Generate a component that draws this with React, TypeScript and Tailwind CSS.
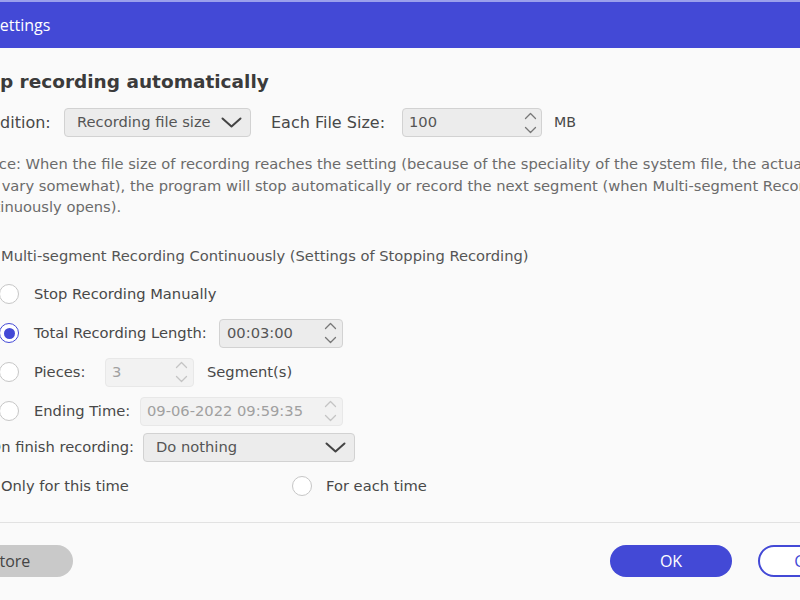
import React from "react";

function Chevron({ w = 21, h = 11, color = "#444", sw = 2 }: { w?: number; h?: number; color?: string; sw?: number }) {
  return (
    <svg width={w} height={h} viewBox={`0 0 ${w} ${h}`} fill="none">
      <path d={`M1.5 1.5 L${w / 2} ${h - 1.5} L${w - 1.5} 1.5`} stroke={color} strokeWidth={sw} strokeLinecap="round" strokeLinejoin="round" />
    </svg>
  );
}

function SpinArrows({ color = "#777" }: { color?: string }) {
  return (
    <svg width="13" height="22" viewBox="0 0 13 22" fill="none">
      <path d="M1.5 6.5 L6.5 1.5 L11.5 6.5" stroke={color} strokeWidth="1.3" strokeLinecap="round" strokeLinejoin="round" />
      <path d="M1.5 15.5 L6.5 20.5 L11.5 15.5" stroke={color} strokeWidth="1.3" strokeLinecap="round" strokeLinejoin="round" />
    </svg>
  );
}

function Radio({ checked = false }: { checked?: boolean }) {
  return checked ? (
    <div className="w-[20px] h-[20px] shrink-0 rounded-full border-[1.5px] border-[#4349d6] bg-white flex items-center justify-center">
      <div className="w-[11px] h-[11px] rounded-full bg-[#4349d6]" />
    </div>
  ) : (
    <div className="w-[20px] h-[20px] shrink-0 rounded-full border-[1.5px] border-[#c6c6c6] bg-white" />
  );
}

export default function App() {
  return (
    <div className="w-[800px] h-[600px] overflow-hidden bg-[#fafafa] font-['DejaVu_Sans',sans-serif] text-[#484848]">
      {/* header */}
      <div className="h-[48px] border-t-2 border-[#9ba0ec] bg-[#4349d6] flex items-center">
        <span className="ml-[-9px] text-[16px] text-white font-['Open_Sans',sans-serif]">Settings</span>
      </div>

      <div className="ml-[-31px] w-[900px]">
        {/* title */}
        <div className="mt-[20px] h-[28px] leading-[28px] text-[18.5px] font-bold text-[#3b3b3b] ml-[-4px] whitespace-nowrap">
          Stop recording automatically
        </div>

        {/* condition row */}
        <div className="mt-[12px] h-[29px] flex items-center text-[14.7px]">
          <div className="w-[95px] text-[16px] whitespace-nowrap">Condition:</div>
          <div className="w-[187px] h-[29px] rounded-[4px] border border-[#d2d2d2] bg-[#ececec] flex items-center pl-[12px] pr-[8px] justify-between">
            <span className="text-[#555]">Recording file size</span>
            <Chevron />
          </div>
          <div className="ml-[20px] w-[131px] text-[16px] whitespace-nowrap">Each File Size:</div>
          <div className="w-[140px] h-[29px] rounded-[4px] border border-[#d2d2d2] bg-[#ececec] flex items-center pl-[6px] pr-[4px] justify-between">
            <span className="text-[#555]">100</span>
            <SpinArrows />
          </div>
          <div className="ml-[12px] text-[14.2px]">MB</div>
        </div>

        {/* notice */}
        <div className="mt-[16px] text-[14.7px] leading-[21.5px] text-[#6b6b6b] whitespace-nowrap">
          <div>Notice: When the file size of recording reaches the setting (because of the speciality of the system file, the actual size</div>
          <div className="ml-[-4px]">may vary somewhat), the program will stop automatically or record the next segment (when Multi-segment Recording</div>
          <div className="ml-[-3px]">Continuously opens).</div>
        </div>

        {/* multi segment */}
        <div className="mt-[29px] h-[20px] flex items-center text-[14.7px] text-[#555]">
          <div className="w-[18px] h-[18px] rounded-[3px] border-[1.5px] border-[#c6c6c6] bg-white shrink-0" />
          <span className="ml-[14px] whitespace-nowrap">Multi-segment Recording Continuously (Settings of Stopping Recording)</span>
        </div>

        {/* radio options */}
        <div className="mt-[13px] pl-[30px] flex flex-col gap-[10px] text-[14.7px]">
          <div className="h-[29px] flex items-center">
            <Radio />
            <span className="ml-[15px] whitespace-nowrap">Stop Recording Manually</span>
          </div>
          <div className="h-[29px] flex items-center">
            <Radio checked />
            <span className="ml-[15px] w-[185px] whitespace-nowrap">Total Recording Length:</span>
            <div className="w-[124px] h-[29px] rounded-[4px] border border-[#d2d2d2] bg-[#ececec] flex items-center pl-[7px] pr-[5px] justify-between">
              <span className="text-[#555]">00:03:00</span>
              <SpinArrows />
            </div>
          </div>
          <div className="h-[29px] flex items-center">
            <Radio />
            <span className="ml-[15px] w-[71px] whitespace-nowrap">Pieces:</span>
            <div className="w-[89px] h-[29px] rounded-[4px] border border-[#e8e8e8] bg-[#f2f2f2] flex items-center pl-[6px] pr-[5px] justify-between">
              <span className="text-[#a0a0a0]">3</span>
              <SpinArrows color="#c4c4c4" />
            </div>
            <span className="ml-[13px] whitespace-nowrap">Segment(s)</span>
          </div>
          <div className="h-[29px] flex items-center">
            <Radio />
            <span className="ml-[15px] w-[106px] whitespace-nowrap">Ending Time:</span>
            <div className="w-[203px] h-[29px] rounded-[4px] border border-[#e8e8e8] bg-[#f2f2f2] flex items-center pl-[6px] pr-[5px] justify-between">
              <span className="text-[#a0a0a0]">09-06-2022 09:59:35</span>
              <SpinArrows color="#c4c4c4" />
            </div>
          </div>
        </div>

        {/* on finish */}
        <div className="mt-[7px] h-[29px] flex items-center text-[14.7px]">
          <div className="w-[174px] flex justify-end pr-[9px] whitespace-nowrap">On finish recording:</div>
          <div className="w-[212px] h-[29px] rounded-[4px] border border-[#d2d2d2] bg-[#ececec] flex items-center pl-[12px] pr-[8px] justify-between">
            <span className="text-[#555]">Do nothing</span>
            <Chevron />
          </div>
        </div>

        {/* scope */}
        <div className="mt-[10px] h-[29px] flex items-center text-[14.7px]">
          <div className="w-[323px] flex items-center">
            <Radio />
            <span className="ml-[12px] whitespace-nowrap">Only for this time</span>
          </div>
          <div className="flex items-center">
            <Radio />
            <span className="ml-[14px] whitespace-nowrap">For each time</span>
          </div>
        </div>
      </div>

      {/* separator */}
      <div className="mt-[21px] h-px bg-[#e2e2e2]" />

      {/* footer */}
      <div className="mt-[22px] ml-[-49px] w-[929px] flex items-center font-['Open_Sans',sans-serif] text-[16px]">
        <div className="w-[122px] h-[32px] rounded-full bg-[#c9c9c9] text-[#444] flex items-center pl-[22px]">Restore</div>
        <div className="flex-1" />
        <div className="w-[122px] h-[32px] rounded-full bg-[#4349d6] text-white flex items-center justify-center">OK</div>
        <div className="ml-[26px] w-[122px] h-[32px] rounded-full border-2 border-[#4349d6] bg-white text-[#4349d6] flex items-center justify-center">Cancel</div>
      </div>
    </div>
  );
}
